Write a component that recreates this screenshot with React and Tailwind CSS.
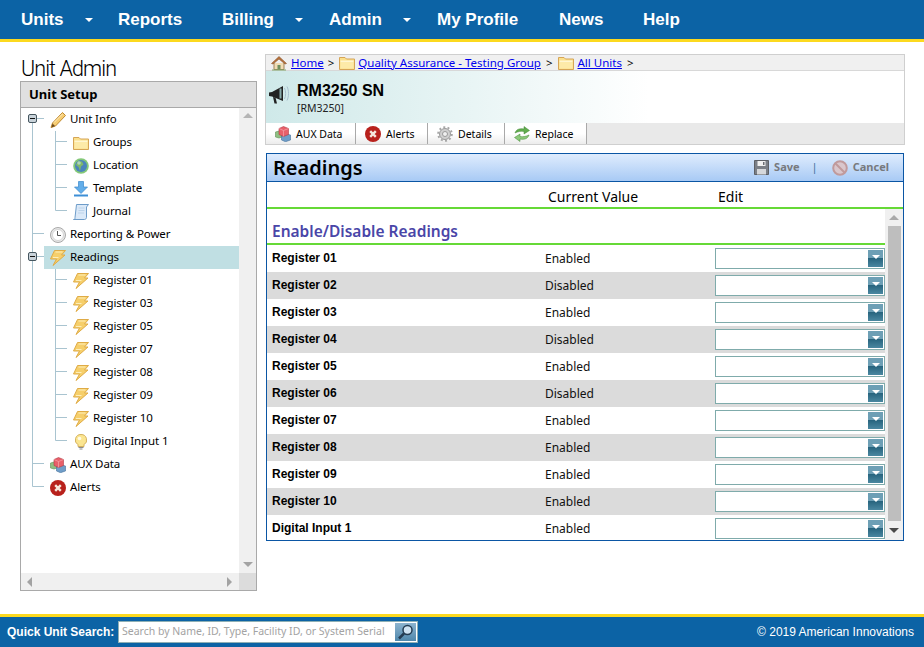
import React from "react";

const tahoma = "font-['Noto_Sans',sans-serif]";
const arial = "font-['Liberation_Sans',Arial,sans-serif]";

const Folder = ({ s = 16 }) => (
  <svg width={s} height={s} viewBox="0 0 16 16" className="shrink-0">
    <path d="M0.500 2.500h5.500l1.500 1.500h8v10.500h-15z" fill="#fbe08c" stroke="#d6a556" />
    <path d="M1.500 5.500h13v1.500h-13z" fill="#fff6d2" />
    <path d="M1.500 7h13v6.500h-13z" fill="#fdeaa8" />
  </svg>
);
const Pencil = () => (
  <svg width="16" height="16" viewBox="0 0 16 16" className="shrink-0">
    <path d="M12.500 0.500l3 3-10 10.500-4.500 1.500 1.500-4.500z" fill="#f7cd72" stroke="#c08a32" />
    <path d="M2.500 11.500l2.500 2.500-3.500 1.500z" fill="#6b4a20" />
    <path d="M4 10.500l8.500-8.500" stroke="#fdeec4" />
  </svg>
);
const Globe = () => (
  <svg width="16" height="16" viewBox="0 0 16 16" className="shrink-0">
    <circle cx="8" cy="8" r="7.800" fill="#84c878" />
    <circle cx="8" cy="8" r="6" fill="#4a84bd" />
    <path d="M5 3l4 .5 1.500 3-2.500 2-1 4.500-1.500-4-2.500-2z" fill="#7fb86a" />
    <circle cx="6" cy="5" r="1.800" fill="#cfe6f5" opacity="0.6" />
  </svg>
);
const Download = () => (
  <svg width="16" height="16" viewBox="0 0 16 16" className="shrink-0">
    <path d="M5.500 0.500h5v5.500h4L8 12.500 1.500 6h4z" fill="#63aeea" stroke="#3a88cb" strokeWidth="0.700" />
    <path d="M1 13.500h14v2H1z" fill="#3d8fd6" />
  </svg>
);
const Scroll = () => (
  <svg width="16" height="16" viewBox="0 0 16 16" className="shrink-0">
    <path d="M3.500 0.500h12l-2 2.500v10.500c0 1-1 2-2 2h-11c1.500 0 1.500-1 1.500-2z" fill="#dbe9f8" stroke="#6e9cc9" />
    <path d="M5.500 4h6M5.500 6.500h6M5 9h6" stroke="#bcd3ea" />
  </svg>
);
const Clock = () => (
  <svg width="16" height="16" viewBox="0 0 16 16" className="shrink-0">
    <circle cx="8" cy="8" r="7.500" fill="#e8e8e8" stroke="#a9a9a9" />
    <circle cx="8" cy="8" r="5.500" fill="#fff" stroke="#d5d5d5" />
    <path d="M7.500 4v4.500h3.500" fill="none" stroke="#555" />
  </svg>
);
const Bolt = () => (
  <svg width="16" height="16" viewBox="0 0 16 16" className="shrink-0">
    <path d="M4.500 0.500h11l-4 4.500h3.500L3 15.500l3.500-6.500H0.500z" fill="#f6cf6b" stroke="#dfab46" />
    <path d="M5.500 2h7M3 7.500h5.500" stroke="#fdeebb" />
  </svg>
);
const Bulb = () => (
  <svg width="16" height="16" viewBox="0 0 16 16" className="shrink-0">
    <path d="M8 0.500a5.500 5.500 0 0 0-3 10.200v1.800h6v-1.800A5.500 5.500 0 0 0 8 0.500z" fill="#fbe590" stroke="#d4b15e" />
    <path d="M5.500 13.500h5M6.500 15h3" stroke="#8c8c8c" strokeWidth="1.200" />
    <circle cx="6.500" cy="4.500" r="1.800" fill="#fffbe6" />
  </svg>
);
const Cubes = () => (
  <svg width="16" height="16" viewBox="0 0 16 16" className="shrink-0">
    <path d="M0.500 6l3.500-1 3 1v5l-3 1-3.500-1z" fill="#8fbf82" stroke="#5f8f56" strokeWidth="0.600" />
    <path d="M6.500 9l4-1.200 5 1.200v5l-5 1.700-4-1.700z" fill="#6f9ec9" stroke="#44709b" strokeWidth="0.600" />
    <path d="M4 2.500l4.500-2 5 2v6l-5 2-4.500-2z" fill="#e8606a" stroke="#b23a44" strokeWidth="0.600" />
    <path d="M4 2.500l4.500 2 5-2M8.500 4.500v6" fill="none" stroke="#f7a5aa" strokeWidth="0.700" />
  </svg>
);
const Ex = () => (
  <svg width="16" height="16" viewBox="0 0 16 16" className="shrink-0">
    <circle cx="8" cy="8" r="8" fill="#b8211c" />
    <path d="M5.200 5.200l5.600 5.600M10.800 5.200l-5.600 5.600" stroke="#f6e7dc" strokeWidth="2.400" />
  </svg>
);
const Home = () => (
  <svg width="16" height="16" viewBox="0 0 16 16" className="shrink-0">
    <path d="M3 8v6.500h10V8" fill="#f0dcb4" stroke="#a0825a" />
    <path d="M0.500 8.500L8 1.500l7.500 7-1.500.5L8 4 2 9z" fill="#b5713c" stroke="#8a5229" strokeWidth="0.600" />
    <path d="M6.500 10h3v4.500h-3z" fill="#6f8f5e" />
    <path d="M1 15h14" stroke="#7fa86a" />
  </svg>
);
const Megaphone = () => (
  <svg width="24" height="24" viewBox="0 0 24 24" className="shrink-0">
    <path d="M1 10.500l3-.5L15 4v15L4 14.500l-3-.5z" fill="#222" />
    <path d="M12.500 6.500v10" stroke="#8aa" strokeWidth="2" />
    <path d="M5 15l1.500 6.500h2.500l-1.500-6z" fill="#222" />
    <path d="M16.500 6c1.500 3 1.500 8 0 11M19 4.500c2 4 2 10 0 14" fill="none" stroke="#a9bfcf" />
  </svg>
);
const Gear = () => (
  <svg width="16" height="16" viewBox="0 0 16 16" className="shrink-0">
    <circle cx="8" cy="8" r="5.500" fill="#cfcfcf" stroke="#9a9a9a" />
    <circle cx="8" cy="8" r="6.800" fill="none" stroke="#a6a6a6" strokeWidth="2" strokeDasharray="2 2.300" />
    <circle cx="8" cy="8" r="2.500" fill="#f0f0f0" stroke="#9a9a9a" />
  </svg>
);
const Replace = () => (
  <svg width="16" height="16" viewBox="0 0 16 16" className="shrink-0">
    <path d="M1 7c1-3.500 4.500-5 9-4V0.500l5.500 4-5.500 3.500V5.500C7 5 4 5.500 1 7z" fill="#62ad4f" stroke="#3e8431" strokeWidth="0.500" />
    <path d="M15 9c-1 3.500-4.500 5-9 4v2.500L0.500 11.500 6 8v2.500c3 .5 6 0 9-1.500z" fill="#8cc97a" stroke="#3e8431" strokeWidth="0.500" />
  </svg>
);
const Floppy = () => (
  <svg width="15" height="15" viewBox="0 0 15 15" className="shrink-0">
    <path d="M0.500 0.500h14v14h-14z" fill="#7b7f86" stroke="#5d6066" />
    <path d="M3.500 1h8v5h-8z" fill="#f0f0f0" />
    <path d="M9 2h1.500v3H9z" fill="#6a6d73" />
    <path d="M3 9h9v5.500H3z" fill="#d6d8db" />
  </svg>
);
const Cancel = () => (
  <svg width="16" height="16" viewBox="0 0 16 16" className="shrink-0">
    <circle cx="8" cy="8" r="6.800" fill="#d9c6cc" stroke="#c09a9c" strokeWidth="2" />
    <path d="M3.500 3.500l9 9" stroke="#c09a9c" strokeWidth="2" />
  </svg>
);
const Search = () => (
  <svg width="18" height="16" viewBox="0 0 18 16">
    <circle cx="10.500" cy="6" r="4.500" fill="#cfe3f2" stroke="#243c52" strokeWidth="1.500" />
    <path d="M7 9.500L2 14.500" stroke="#243c52" strokeWidth="2.500" />
  </svg>
);

// tree connector cell: T branch, L last branch, I straight, M / MT branch with minus box
const Guide = ({ type }) => (
  <svg width="23" height="23" viewBox="0 0 23 23" fill="none" className="shrink-0">
    {type === "I" && <path d="M11.500 0v23" stroke="#a9c4d0" />}
    {type === "T" && <path d="M11.500 0v23M11.500 10.500H23" stroke="#a9c4d0" />}
    {type === "L" && <path d="M11.500 0v10.500H23" stroke="#a9c4d0" />}
    {(type === "M" || type === "MT") && (
      <>
        <path d={type === "M" ? "M11.500 11v12M11.500 10.500H23" : "M11.500 0v23M11.500 10.500H23"} stroke="#a9c4d0" />
        <rect x="7.500" y="6.500" width="8" height="8" rx="1.500" fill="#c9d3da" stroke="#46565f" />
        <path d="M9 10.500h5" stroke="#111" />
      </>
    )}
  </svg>
);

const treeRows = [
  { label: "Unit Info", icon: Pencil, guides: ["M"] },
  { label: "Groups", icon: Folder, guides: ["I", "T"] },
  { label: "Location", icon: Globe, guides: ["I", "T"] },
  { label: "Template", icon: Download, guides: ["I", "T"] },
  { label: "Journal", icon: Scroll, guides: ["I", "L"] },
  { label: "Reporting & Power", icon: Clock, guides: ["T"] },
  { label: "Readings", icon: Bolt, guides: ["MT"], selected: true },
  { label: "Register 01", icon: Bolt, guides: ["I", "T"] },
  { label: "Register 03", icon: Bolt, guides: ["I", "T"] },
  { label: "Register 05", icon: Bolt, guides: ["I", "T"] },
  { label: "Register 07", icon: Bolt, guides: ["I", "T"] },
  { label: "Register 08", icon: Bolt, guides: ["I", "T"] },
  { label: "Register 09", icon: Bolt, guides: ["I", "T"] },
  { label: "Register 10", icon: Bolt, guides: ["I", "T"] },
  { label: "Digital Input 1", icon: Bulb, guides: ["I", "L"] },
  { label: "AUX Data", icon: Cubes, guides: ["T"] },
  { label: "Alerts", icon: Ex, guides: ["L"] },
];

const readings = [
  ["Register 01", "Enabled"],
  ["Register 02", "Disabled"],
  ["Register 03", "Enabled"],
  ["Register 04", "Disabled"],
  ["Register 05", "Enabled"],
  ["Register 06", "Disabled"],
  ["Register 07", "Enabled"],
  ["Register 08", "Enabled"],
  ["Register 09", "Enabled"],
  ["Register 10", "Enabled"],
  ["Digital Input 1", "Enabled"],
];

const tabs = [
  { label: "AUX Data", icon: Cubes, w: "w-[90px]" },
  { label: "Alerts", icon: Ex, w: "w-[72px]" },
  { label: "Details", icon: Gear, w: "w-[77px]" },
  { label: "Replace", icon: Replace, w: "w-[82px]" },
];

const navItems = [
  { label: "Units", w: "w-[97px]", caret: "ml-[21px]" },
  { label: "Reports", w: "w-[104px]" },
  { label: "Billing", w: "w-[107px]", caret: "ml-[21px]" },
  { label: "Admin", w: "w-[108px]", caret: "ml-[21px]" },
  { label: "My Profile", w: "w-[122px]" },
  { label: "News", w: "w-[84px]" },
  { label: "Help", w: "w-[60px]" },
];

const Tri = ({ dir, color }) => {
  const d = {
    up: "M0 7L5 2l5 5z",
    down: "M0 2h10L5 7z",
    left: "M7 0v10L2 5z",
    right: "M2 0v10l5-5z",
  }[dir];
  return (
    <svg width="10" height="10" viewBox="0 0 10 10">
      <path d={d} fill={color} />
    </svg>
  );
};

const Dropdown = () => (
  <div className="mt-[3px] flex h-[21px] w-[170px] shrink-0 items-center justify-end border border-[#7fabab] bg-white pr-px">
    <div className="flex h-[17px] w-[15px] justify-center bg-[linear-gradient(#6d9fb5_0%,#6d9fb5_45%,#28657f_50%,#4a87a0_100%)] pt-[5px]">
      <div className="h-0 w-0 border-x-[4px] border-t-[4px] border-x-transparent border-t-white" />
    </div>
  </div>
);

export default function App() {
  return (
    <div className="flex h-[647px] w-[924px] flex-col overflow-hidden bg-white">
      <nav className={`flex h-[42px] shrink-0 items-center border-b-[3px] border-[#fcd91f] bg-[#0c63a5] pl-[21px] ${arial}`}>
        {navItems.map((item) => (
          <div key={item.label} className={`flex items-center text-[17px] font-bold text-white ${item.w}`}>
            {item.label}
            {item.caret && (
              <span className={`h-0 w-0 border-x-[4px] border-t-[4px] border-x-transparent border-t-white ${item.caret}`} />
            )}
          </div>
        ))}
      </nav>

      <main className="flex flex-1 pl-5">
        <aside className="w-[237px] shrink-0 pt-[13px]">
          <h1 className="h-[26px] pl-px font-['Roboto',sans-serif] text-[21.5px] font-light leading-[27px] tracking-[-0.9px] text-black">Unit Admin</h1>
          <div className="flex h-[510px] flex-col border border-[#a9a9a9]">
            <div className={`flex h-[26px] shrink-0 items-center border-b border-[#a9a9a9] bg-[#e0e0e0] pl-2 text-[13px] font-bold text-black ${tahoma}`}>
              Unit Setup
            </div>
            <div className="flex h-[465px] shrink-0">
              <div className={`flex-1 text-[11.5px] tracking-[-0.1px] text-black ${tahoma}`}>
                {treeRows.map((row) => {
                  const Icon = row.icon;
                  return (
                    <div key={row.label} className="flex h-[23px] items-center">
                      {row.guides.map((g, i) => (
                        <Guide key={i} type={g} />
                      ))}
                      <div className={`flex h-full flex-1 items-center gap-1 pl-[6px] ${row.selected ? "bg-[#c0dfe3]" : ""}`}>
                        <Icon />
                        <span className="pb-[2px]">{row.label}</span>
                      </div>
                    </div>
                  );
                })}
              </div>
              <div className="flex w-[17px] shrink-0 flex-col items-center justify-between bg-[#f0f0f0] py-[3px]">
                <Tri dir="up" color="#b5b5b5" />
                <Tri dir="down" color="#a3a3a3" />
              </div>
            </div>
            <div className="flex h-[17px] shrink-0">
              <div className="flex flex-1 items-center justify-between bg-[#f0f0f0] px-[4px]">
                <Tri dir="left" color="#a3a3a3" />
                <Tri dir="right" color="#a3a3a3" />
              </div>
              <div className="w-[17px] bg-[#dcdcdc]" />
            </div>
          </div>
        </aside>

        <section className="ml-[8px] w-[640px] shrink-0 pt-3">
          <div className="border border-[#cfcfcf]">
            <div className={`flex h-4 items-center border-b border-[#d8d8d8] bg-[#f0f0f0] pl-[5px] text-[11.5px] text-black ${tahoma}`}>
              <Home />
              <a href="#" className="ml-1 text-[#0000ee] underline">Home</a>
              <span className="ml-1 mr-[5px]">&gt;</span>
              <Folder />
              <a href="#" className="ml-[3px] text-[#0000ee] underline">Quality Assurance - Testing Group</a>
              <span className="mx-[5px]">&gt;</span>
              <Folder />
              <a href="#" className="ml-1 text-[#0000ee] underline">All Units</a>
              <span className="ml-[5px]">&gt;</span>
            </div>
            <div className="flex h-[52px] items-start gap-[5px] bg-[linear-gradient(90deg,#cfe9e9_0%,#ffffff_60%)] pl-[2px] pt-[10px]">
              <div className="pt-px">
                <Megaphone />
              </div>
              <div className="flex flex-col">
                <span className={`text-[16px] font-bold leading-[19px] text-black ${arial}`}>RM3250 SN</span>
                <span className={`text-[10.5px] leading-[16px] text-[#222] ${tahoma}`}>[RM3250]</span>
              </div>
            </div>
            <div className="flex h-[21px] bg-[#e9e9e9]">
              {tabs.map((tab) => {
                const Icon = tab.icon;
                return (
                  <div
                    key={tab.label}
                    className={`flex items-center gap-[5px] border-r border-[#a9a9a9] bg-[linear-gradient(#ffffff_50%,#ececec_100%)] pl-[9px] pt-px text-[10.5px] text-black ${tab.w} ${tahoma}`}
                  >
                    <Icon />
                    <span className="pt-px">{tab.label}</span>
                  </div>
                );
              })}
            </div>
          </div>

          <div className="ml-px mt-2 h-[388px] w-[638px] border border-[#0b56a4]">
            <div className="flex h-[28px] items-center justify-between border-b border-[#0b56a4] bg-[linear-gradient(#dfecfd,#a8caf5)] pl-[6px] pr-[14px]">
              <span className={`text-[20px] font-semibold leading-none text-black ${tahoma}`}>Readings</span>
              <div className={`flex items-center text-[11px] font-bold text-[#77797d] ${tahoma}`}>
                <Floppy />
                <span className="ml-[5px]">Save</span>
                <span className="ml-3 mr-[14px] font-normal text-[#44709b]">|</span>
                <Cancel />
                <span className="ml-[5px]">Cancel</span>
              </div>
            </div>
            <div className={`flex h-[27px] items-center border-b-2 border-[#66d936] pt-[3px] text-[14px] text-black ${tahoma}`}>
              <span className="ml-[281px] w-[170px]">Current Value</span>
              <span>Edit</span>
            </div>
            <div className="flex h-[331px] overflow-hidden">
              <div className="w-[618px] shrink-0">
                <div className={`flex h-[36px] items-end border-b-2 border-[#66d936] pl-[5px] text-[15.5px] font-semibold text-[#4a46a8] ${tahoma}`}>
                  Enable/Disable Readings
                </div>
                {readings.map(([name, value], i) => (
                  <div key={name} className={`flex h-[27px] shrink-0 ${i % 2 ? "bg-[#dbdbdb]" : "bg-white"}`}>
                    <span className={`ml-[5px] w-[273px] pt-[5px] text-[12px] font-bold leading-[16px] text-black ${arial}`}>{name}</span>
                    <span className={`w-[170px] pt-[6px] text-[12px] leading-[16px] text-[#111] ${tahoma}`}>{value}</span>
                    <Dropdown />
                  </div>
                ))}
              </div>
              <div className="flex w-[18px] shrink-0 flex-col items-center bg-[#f0f0f0]">
                <div className="flex h-[17px] items-center">
                  <Tri dir="up" color="#a9a9a9" />
                </div>
                <div className="h-[295px] w-[13px] bg-[#bebebe]" />
                <div className="flex h-[19px] items-center">
                  <Tri dir="down" color="#4a4a4a" />
                </div>
              </div>
            </div>
          </div>
        </section>
      </main>

      <footer className="flex h-[33px] shrink-0 items-center justify-between border-t-[3px] border-[#fcd91f] bg-[#0c63a5] pl-[7px] pr-[10px]">
        <div className="flex items-center">
          <span className={`w-[111px] text-[12px] font-bold text-white ${arial}`}>Quick Unit Search:</span>
          <div className="flex h-[22px] w-[300px] items-center justify-between border border-[#8fb0b5] bg-white pl-[3px] pr-px">
            <span className={`whitespace-nowrap text-[10.5px] text-[#a3a3a3] ${tahoma}`}>Search by Name, ID, Type, Facility ID, or System Serial</span>
            <div className="flex h-[18px] w-[21px] shrink-0 items-center justify-center bg-[linear-gradient(#8db4cf,#4f87ac)]">
              <Search />
            </div>
          </div>
        </div>
        <span className={`text-[12px] text-white ${arial}`}>© 2019 American Innovations</span>
      </footer>
    </div>
  );
}
